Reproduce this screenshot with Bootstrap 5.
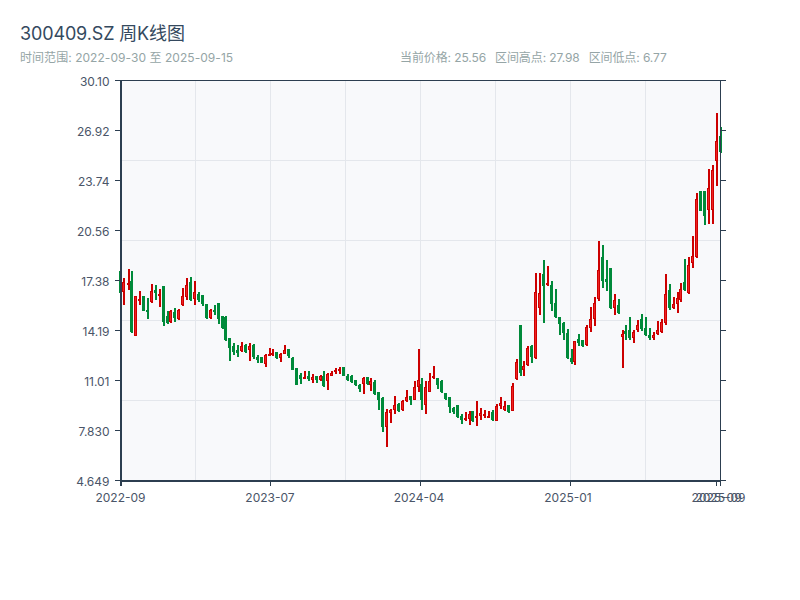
<!DOCTYPE html>
<html lang="zh-CN">
<head>
<meta charset="utf-8">
<title>300409.SZ 周K线图</title>
<link rel="stylesheet" href="https://cdn.jsdelivr.net/npm/bootstrap@5.3.0/dist/css/bootstrap.min.css">
<style>
html,body{background:#fff;font-family:Inter,"Noto Sans CJK SC",sans-serif;}
.kpage{width:800px;height:600px;overflow:hidden;}
.khead{height:70px;padding:23px 20px 0;}
.ktitle{font-size:18px;line-height:22px;font-weight:400;letter-spacing:-.14px;color:#34495e;margin:0 0 5px;font-family:Inter,"Noto Sans CJK SC",sans-serif;}
.ksub{font-size:12px;line-height:16px;color:#95a5a6;letter-spacing:.05px;}
.kstats{gap:9px;letter-spacing:-.1px;}
.kchart{display:block;width:800px;height:530px;}
.kchart text{font-family:Inter,"Noto Sans CJK SC",sans-serif;font-size:12px;fill:#4a5568;}
.plotbg{fill:#f8f9fb;}
.gridln{stroke:#e4e7ec;stroke-width:1;}
.axisln{stroke:#2c3e50;fill:none;}
.wick-r{fill:#cc0000;}.wick-g{fill:#008a3a;}
.body-r{fill:#ee2222;stroke:#cc0000;stroke-width:1;}
.body-g{fill:#008a3a;stroke:#008a3a;stroke-width:1;}
</style>
</head>
<body>
<div class="kpage">
  <div class="khead">
    <h1 class="ktitle">300409.SZ 周K线图</h1>
    <div class="row g-0 ksub">
      <div class="col-6">时间范围: 2022-09-30 至 2025-09-15</div>
      <div class="col-6 d-flex kstats"><span>当前价格: 25.56</span><span>区间高点: 27.98</span><span>区间低点: 6.77</span></div>
    </div>
  </div>
  <svg class="kchart" viewBox="0 70 800 530" xmlns="http://www.w3.org/2000/svg" id="chart">
    <rect class="plotbg" x="120.5" y="80.5" width="600" height="400"/>
    <g id="grid"></g>
    <g id="candles"></g>
    <g id="axes"></g>
    <g id="labels">
      <text x="109.5" y="81.5" text-anchor="end" dominant-baseline="central">30.10</text>
      <text x="109.5" y="131.5" text-anchor="end" dominant-baseline="central">26.92</text>
      <text x="109.5" y="181.5" text-anchor="end" dominant-baseline="central">23.74</text>
      <text x="109.5" y="231.5" text-anchor="end" dominant-baseline="central">20.56</text>
      <text x="109.5" y="281.5" text-anchor="end" dominant-baseline="central">17.38</text>
      <text x="109.5" y="331.5" text-anchor="end" dominant-baseline="central">14.19</text>
      <text x="109.5" y="381.5" text-anchor="end" dominant-baseline="central">11.01</text>
      <text x="109.5" y="431.5" text-anchor="end" dominant-baseline="central">7.830</text>
      <text x="109.5" y="481.5" text-anchor="end" dominant-baseline="central">4.649</text>
      <text x="120.5" y="497.5" text-anchor="middle" dominant-baseline="central">2022-09</text>
      <text x="270" y="497.5" text-anchor="middle" dominant-baseline="central">2023-07</text>
      <text x="419" y="497.5" text-anchor="middle" dominant-baseline="central">2024-04</text>
      <text x="568" y="497.5" text-anchor="middle" dominant-baseline="central">2025-01</text>
      <text x="716.6" y="497.5" text-anchor="middle" dominant-baseline="central">2025-09</text>
      <text x="720.5" y="497.5" text-anchor="middle" dominant-baseline="central">2025-09</text>
    </g>
  </svg>
</div>
<script src="https://cdn.jsdelivr.net/npm/bootstrap@5.3.0/dist/js/bootstrap.bundle.min.js"></script>
<script>
// [colour, x, wickTop, wickBottom, bodyTop, bodyBottom]
var D=[
'g',120.5,271,293,271,293,'r',123.3,278,305,282,292,'r',128,269,290,283,284,'g',131.3,271,333,281,332,
'r',135.3,296,336,296,336,'r',139.3,291,305,299,301,'g',143.3,296,311,296,311,'g',147.7,298,319,310,312,
'r',151.7,284,303,291,302,'g',155.7,285,300,290,293,'r',159.7,289,307,294,295,'g',163.7,286,326,286,322,
'g',167.7,311,324,316,323,'r',170.7,310,323,311,322,'g',174.7,308,322,312,318,'r',178.3,309,320,310,319,
'r',182.3,288,306,296,305,'r',186.7,278,300,285,297,'g',190.3,277,301,282,300,'r',194.7,281,305,292,299,
'g',198.7,292,302,294,300,'g',202.7,295,306,295,304,'g',206.3,304,319,304,318,'r',210.3,309,319,310,318,
'g',214.7,305,315,310,312,'g',218.7,303,324,303,319,'g',222,316,329,316,328,'g',225.7,316,341,317,340,
'g',229.7,338,361,338,348,'g',233.7,343,355,346,352,'g',237.7,345,357,350,353,'r',241.3,342,352,346,351,
'g',245.7,344,353,345,352,'r',249.7,343,361,346,350,'g',253.7,344,359,345,357,'g',257.7,355,363,357,360,
'g',261.7,357,363,357,363,'r',265.3,353.5,366,355,364,'r',269.3,348,356,353.5,355.5,'r',272.7,348.5,355.5,353,355,
'g',276.7,352,359,352,358,'r',280.7,353,362,354,358,'r',284.3,345,354,350,354,'g',288.3,349,358,349,356,
'g',292.3,357,370,358,370,'g',296.3,368,385,368,385,'g',300.7,373,384,375,379,'r',304.7,371,379,377,379,
'g',308.7,371,381,376,379,'r',312.7,374,383,377,380,'g',316.7,376,383,376,380,'r',320.7,375,381,376,380,
'g',323.7,371,387,376,386,'r',327.7,373,390,374,381,'r',331.3,371,376,373,376,'r',335.7,368,374,370,372,
'r',339.3,367,373.5,369,371,'g',343.3,367,376,367,376,'g',347.7,374,381,376,380,'g',351.7,375,383,376,382,
'g',355.7,380,386,380,385,'g',359.3,384,392,385,389,'r',363.7,377,394,377.5,384,'g',367.7,377,385,377,384,
'r',370.7,378,391,381,385,'g',374.7,380,395,382,394,'g',378.3,392,410,392,400,'g',382.3,397,432,398,427,
'r',386.7,409,447,412,427,'r',390.7,409,423,410,413,'r',394.7,396,414,405,410,'g',398.7,403,412,404,411,
'r',402.7,400,411,401,410,'r',406.7,390,402,397,401,'g',410.7,396,405,396,400,'r',414.7,381,400,387,399.5,
'r',418.7,349,392,380,387,'g',421.7,378,410,384,400,'r',425.7,381,414,387,405,'r',429.7,373,392,381,392,
'r',433.7,366,379,376,378,'g',437.7,378,389,378,385,'g',441.7,380,393,381,392,'g',445.3,393,400,393,399,
'g',449.3,397,413,397,407,'g',453.7,407,414,408,412,'g',457.7,405,418,405,417,'g',461.7,414,424,416,420,
'r',465.7,412,421,418,420,'r',469.7,411,425,414,419,'g',472.7,411,422,411,421,'r',476.7,401,426,416,418,
'r',480.7,408,420,413,416,'r',484.7,410,418,414,416,'r',488.7,411,418,416,418,'g',492.7,410,421,412,420,
'r',496.7,404,421,406,421,'r',500.7,397,409,403,406,'r',504.7,401,411,406,410,'g',508.7,405,413,405,412,
'r',512.3,383,411,386,411,'r',516.5,359,380,362,379,'g',520.3,325,376,325,373,'r',523.7,361,376,366,370,
'r',527.7,346,366,348,365,'g',531.7,345,363,346,357,'r',535.3,273,359,292,358,'r',539.7,273,315,293,308,
'g',543.7,260,323,274,286,'r',547.7,266,286,283,285,'g',551.7,281,311,285,304,'g',555.7,289,318,303,317,
'g',559.7,317,335,317,324,'g',563.7,322,340,323,333,'g',567.7,329,359,333,358,'g',571,349,364,358,362,
'r',574.7,341,365,341,362,'g',578.7,334,346,339,343,'g',582.7,340,347,340,346,'r',586.7,325,346,327,345,
'r',590.7,307,332,319,328,'r',594.7,297,326,303,319,'r',598.7,241,301,270,299,'g',602.7,245,288,257,281,
'g',606.7,260,291,279,282,'g',610.7,268,309,268,308,'r',614.7,294,315,300,308,'g',618.3,299,314,305,313,
'r',622,330,368,334,337,'g',625.3,325,340,331,334,'g',629.3,317,340,330,338,'r',633.5,330,343,332,338,
'r',637.5,320,332,325,330,'g',641.7,314,331,319,329,'g',645.7,317,336,328,335,'g',649.7,328,340,335,338,
'r',653.7,332,340,335,338,'r',657.7,321,335,330,334,'r',661.7,319,333,322,332,'r',665.7,274,325,294,323,
'g',669.7,284,310,290,308,'r',673,297,309,304,308,'r',677,292,313,298,304,'r',680.7,283,302,289,300,
'g',684.7,259,291,282,290,'r',688.7,257,294,265,293,'r',692.7,236,268,256,263,'r',696.7,193,258,199,257,
'g',700.7,191,211,191,211,'g',704.7,191,225,191,216,'r',708.7,169,224,188,210,'r',712.7,165,224,170,210,
'r',716.7,113,186,141,161,'g',720.7,127,153,136,152];
var NS='http://www.w3.org/2000/svg';
function el(parent,tag,attrs){var e=document.createElementNS(NS,tag);for(var k in attrs)e.setAttribute(k,attrs[k]);document.getElementById(parent).appendChild(e);return e;}
var i;
for(i=1;i<8;i++)el('grid','line',{x1:120.5+75*i,x2:120.5+75*i,y1:80.5,y2:480.5,'class':'gridln'});
for(i=1;i<5;i++)el('grid','line',{x1:120.5,x2:720.5,y1:80.5+80*i,y2:80.5+80*i,'class':'gridln'});
for(i=0;i<D.length;i+=6){
  var c=D[i],xl=Math.round(D[i+1]-1.5);
  var t=Math.round(D[i+4]),b=Math.max(Math.round(D[i+5]),t+2);
  el('candles','rect',{x:xl+1,y:Math.round(D[i+2]),width:2,height:Math.round(D[i+3]-D[i+2]),'class':'wick-'+c});
  el('candles','rect',{x:xl+.5,y:t+.5,width:2,height:b-t-1,'class':'body-'+c});
}
el('axes','line',{x1:115,x2:725,y1:80.5,y2:80.5,'class':'axisln'});
el('axes','line',{x1:720.5,x2:720.5,y1:80.5,y2:486,'class':'axisln'});
el('axes','line',{x1:121,x2:121,y1:80,y2:486,'class':'axisln','stroke-width':2});
el('axes','line',{x1:120,x2:721,y1:481,y2:481,'class':'axisln','stroke-width':2});
for(i=0;i<9;i++){var y=80.5+50*i;
  el('axes','line',{x1:115,x2:120,y1:y,y2:y,'class':'axisln'});
  el('axes','line',{x1:720.5,x2:726,y1:y,y2:y,'class':'axisln'});}
[120.5,270.5,420.5,570.5,716.5,720.5].forEach(function(t){el('axes','line',{x1:t,x2:t,y1:481,y2:486,'class':'axisln'});});
</script>
</body>
</html>
